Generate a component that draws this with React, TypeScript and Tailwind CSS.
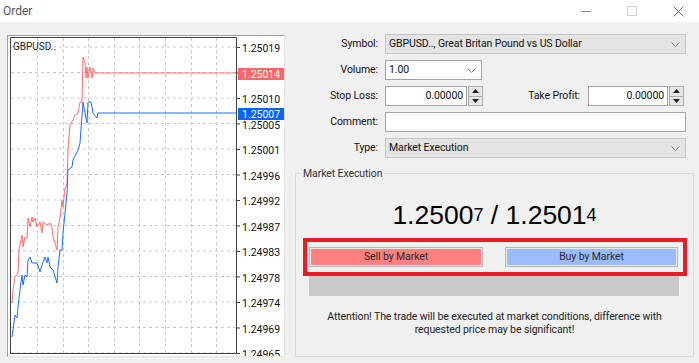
import React from 'react';

const FONT = { fontFamily: 'Roboto, "Liberation Sans", Arial, sans-serif' };

// chart data, window pixel coordinates
const RED = [
  [12, 303], [13, 290], [15, 277], [18, 273], [19, 250], [22, 235], [23, 247], [25, 237], [27, 238],
  [28, 218], [30, 227], [32, 217], [33, 222], [35, 218], [37, 227], [40, 222], [42, 233], [43, 222],
  [47, 225], [50, 223], [52, 228], [53, 237], [55, 243], [57, 250], [58, 227], [60, 218], [62, 200],
  [63, 207], [65, 188], [67, 185], [68, 150], [70, 125], [73, 120], [75, 115], [78, 113], [80, 102],
  [82, 102], [83, 57], [85, 62], [86, 78], [87, 67], [88, 78], [90, 67], [92, 78], [93, 68], [95, 73],
  [237, 73],
];

const BLUE = [
  [12, 337], [13, 330], [15, 315], [17, 318], [18, 307], [20, 290], [22, 275], [23, 285], [25, 275],
  [27, 277], [28, 260], [30, 257], [32, 263], [37, 263], [40, 272], [42, 265], [45, 257], [47, 263],
  [48, 257], [50, 267], [53, 270], [57, 283], [58, 267], [60, 250], [62, 250], [63, 233], [67, 193],
  [68, 170], [72, 167], [73, 160], [77, 152], [78, 150], [80, 143], [83, 102], [85, 113], [87, 123],
  [88, 102], [91, 102], [93, 113], [97, 118], [98, 113], [237, 113],
];

const LEVELS = [
  '1.25019', '', '1.25010', '1.25005', '1.25001', '1.24996', '1.24992',
  '1.24987', '1.24983', '1.24978', '1.24974', '1.24969', '1.24965',
];

const V_LINES = [37, 63, 88, 114, 139, 165, 191, 216];

const pts = (p: number[][]) => p.map(([x, y]) => `${x},${y}`).join(' ');

function TitleBar() {
  return (
    <div className="h-[22px] bg-white flex items-center justify-between">
      <span className="pl-[3px] text-[12px] text-[#555]">Order</span>
      <div className="flex h-full mr-[-2px]">
        <div className="w-[46px] flex items-center justify-center">
          <svg width="10" height="10" viewBox="0 0 10 10">
            <line x1="0" y1="5.5" x2="10" y2="5.5" stroke="#8a8a8a" strokeWidth="1" />
          </svg>
        </div>
        <div className="w-[46px] flex items-center justify-center">
          <svg width="10" height="10" viewBox="0 0 10 10">
            <rect x="0.5" y="0.5" width="9" height="9" fill="none" stroke="#cfcfcf" strokeWidth="1" />
          </svg>
        </div>
        <div className="w-[46px] flex items-center justify-center">
          <svg width="11" height="11" viewBox="0 0 11 11">
            <path d="M0.5 0.5 L10.5 10.5 M10.5 0.5 L0.5 10.5" stroke="#7a7a7a" strokeWidth="1" />
          </svg>
        </div>
      </div>
    </div>
  );
}

function Chart() {
  return (
    <div className="mt-[1px] w-[278px] h-[322px] bg-white border-t border-l border-[#a0a0a0] border-r border-b border-r-[#e3e3e3] border-b-[#e3e3e3] overflow-hidden">
      <svg width="276" height="320" viewBox="8 36 276 320" style={{ display: 'block' }}>
        {LEVELS.map((_, k) => (
          <line key={'h' + k} x1="11" x2="237" y1={47 + k * 25.5} y2={47 + k * 25.5} stroke="#c9c9c9" strokeDasharray="3 3" />
        ))}
        {V_LINES.map((x) => (
          <line key={'v' + x} x1={x + 0.5} x2={x + 0.5} y1="38" y2="353" stroke="#c9c9c9" strokeDasharray="3 3" />
        ))}
        <polyline points={pts(RED)} fill="none" stroke="#ff6e6e" strokeWidth="1" />
        <polyline points={pts(BLUE)} fill="none" stroke="#1e6cff" strokeWidth="1" />
        <path d="M10.5 37.5 L236.5 37.5 M10.5 37.5 L10.5 353.5 L236.5 353.5 M236.5 37.5 L236.5 353.5" stroke="#404040" fill="none" />
        {LEVELS.map((_, k) => (
          <line key={'t' + k} x1="237" x2="240" y1={47.5 + k * 25.5} y2={47.5 + k * 25.5} stroke="#404040" />
        ))}
        {LEVELS.map((l, k) =>
          l ? (
            <text key={'l' + k} x="242" y={52 + k * 25.5} fontSize="10.5" fill="#111" fontFamily="Roboto, sans-serif">
              {l}
            </text>
          ) : null
        )}
        <rect x="238" y="68" width="46" height="12" fill="#fa6666" />
        <text x="242" y="78" fontSize="10.5" fill="#fff" fontFamily="Roboto, sans-serif">1.25014</text>
        <rect x="238" y="108" width="46" height="12" fill="#0a62ff" />
        <text x="242" y="118" fontSize="10.5" fill="#fff" fontFamily="Roboto, sans-serif">1.25007</text>
        <text x="13" y="50" fontSize="10" fill="#1a1a1a" fontFamily="Roboto, sans-serif">GBPUSD..</text>
      </svg>
    </div>
  );
}

function Chevron() {
  return (
    <svg width="9" height="5" viewBox="0 0 9 5">
      <polyline points="0.5,0.5 4.5,4.5 8.5,0.5" fill="none" stroke="#7a7a7a" strokeWidth="1" />
    </svg>
  );
}

function Spinner() {
  return (
    <div className="ml-[1px] w-[15px] h-[20px] border border-[#adadad] bg-[#e6e6e6] flex flex-col">
      <div className="flex-1 flex items-center justify-center border-b border-[#adadad]">
        <svg width="7" height="4" viewBox="0 0 7 4"><polygon points="0,4 3.5,0 7,4" fill="#222" /></svg>
      </div>
      <div className="flex-1 flex items-center justify-center">
        <svg width="7" height="4" viewBox="0 0 7 4"><polygon points="0,0 3.5,4 7,0" fill="#222" /></svg>
      </div>
    </div>
  );
}

function Label({ text, w = 'w-[83px]' }: { text: string; w?: string }) {
  return <div className={`${w} text-right shrink-0`}>{text}</div>;
}

function GreySelect({ value }: { value: string }) {
  return (
    <div className="ml-[7px] w-[301px] h-[20px] border border-[#c4c4c4] bg-[#e4e4e4] flex items-center justify-between pl-[3px] pr-[5px]">
      <span>{value}</span>
      <Chevron />
    </div>
  );
}

function OrderForm() {
  return (
    <div className="flex flex-col gap-[6px] text-[10.5px] tracking-[-0.1px] text-[#111]">
      <div className="h-[20px] flex items-center">
        <Label text="Symbol:" />
        <GreySelect value="GBPUSD.., Great Britan Pound vs US Dollar" />
      </div>
      <div className="h-[20px] flex items-center">
        <Label text="Volume:" />
        <div className="ml-[7px] w-[97px] h-[20px] border border-[#a3a3a3] bg-white flex items-center justify-between pl-[3px] pr-[5px]">
          <span>1.00</span>
          <Chevron />
        </div>
      </div>
      <div className="h-[20px] flex items-center">
        <Label text="Stop Loss:" />
        <div className="ml-[7px] w-[82px] h-[20px] border border-[#a3a3a3] bg-white flex items-center justify-end pr-[3px]">
          0.00000
        </div>
        <Spinner />
        <Label text="Take Profit:" w="w-[97px]" />
        <div className="ml-[8px] w-[80px] h-[20px] border border-[#a3a3a3] bg-white flex items-center justify-end pr-[3px]">
          0.00000
        </div>
        <Spinner />
      </div>
      <div className="h-[20px] flex items-center">
        <Label text="Comment:" />
        <div className="ml-[7px] w-[301px] h-[20px] border border-[#a3a3a3] bg-white" />
      </div>
      <div className="h-[20px] flex items-center">
        <Label text="Type:" />
        <GreySelect value="Market Execution" />
      </div>
    </div>
  );
}

function MarketExecution() {
  return (
    <div className="relative mt-[15px] h-[184px] border border-[#dadada] text-[10.5px] tracking-[-0.1px] text-[#111]">
      <span className="absolute top-[-8px] left-[5px] bg-[#f0f0f0] px-[2px] text-[#333]">Market Execution</span>
      <div className="pt-[25px] h-[57px] flex items-end justify-center leading-[32px] text-black tracking-normal" style={{ fontFamily: '"Liberation Sans", Arial, sans-serif' }}>
        <span className="text-[26.5px]">1.2500</span>
        <span className="text-[18px]">7</span>
        <span className="text-[26.5px]">&nbsp;/&nbsp;1.2501</span>
        <span className="text-[18px]">4</span>
      </div>
      <div className="mt-[7px] ml-[7px] w-[384px] h-[38px] border-4 border-[#ed1c24] flex items-center justify-between pl-[2px] pr-[5px]">
        <div className="w-[174px] h-[20px] border border-[#b8b8b8] p-[1px] bg-[#e9e9e9]">
          <div className="h-full bg-[#ff8080] flex items-center justify-center text-[#2a2a2a]">Sell by Market</div>
        </div>
        <div className="w-[173px] h-[20px] border border-[#b8b8b8] p-[1px] bg-[#e9e9e9]">
          <div className="h-full bg-[#9bbbff] flex items-center justify-center text-[#2a2a2a]">Buy by Market</div>
        </div>
      </div>
      <div className="ml-[13px] w-[370px] h-[20px] bg-[#c9c9c9]" />
      <div className="mt-[14px] text-center leading-[13px] text-[#222]">
        Attention! The trade will be executed at market conditions, difference with
        <br />
        requested price may be significant!
      </div>
    </div>
  );
}

export default function App() {
  return (
    <div className="w-[699px] h-[363px] bg-[#f0f0f0] overflow-hidden" style={FONT}>
      <TitleBar />
      <div className="flex pt-[12px] pl-[7px]">
        <Chart />
        <div className="ml-[10px] w-[399px]">
          <OrderForm />
          <MarketExecution />
        </div>
      </div>
    </div>
  );
}
